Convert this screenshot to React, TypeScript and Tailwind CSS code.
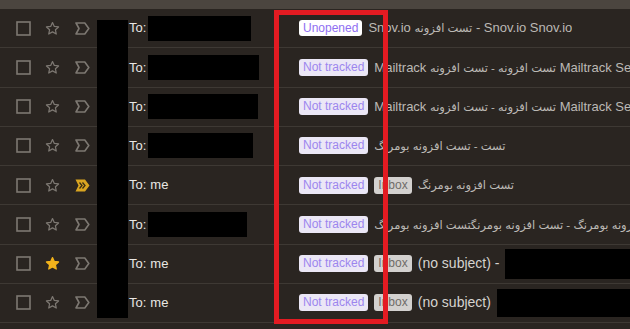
import * as React from "react"

type Row = {
  to: number | null
  badge: "Unopened" | "Not tracked"
  inbox: boolean
  subject: string
  starred?: boolean
  important?: boolean
  tail?: { w: number; h: number }
}

const rows: Row[] = [
  { to: 103, badge: "Unopened", inbox: false, subject: "Snov.io تست افزونه - Snov.io Snov.io" },
  { to: 111, badge: "Not tracked", inbox: false, subject: "Mailtrack تست افزونه - تست افزونه Mailtrack Sender" },
  { to: 110, badge: "Not tracked", inbox: false, subject: "Mailtrack تست افزونه - تست افزونه Mailtrack Sender" },
  { to: 105, badge: "Not tracked", inbox: false, subject: "تست - تست افزونه بومرنگ" },
  { to: null, badge: "Not tracked", inbox: true, subject: "تست افزونه بومرنگ", important: true },
  { to: 99, badge: "Not tracked", inbox: false, subject: "تست افزونه بومرنگ - تست افزونه بومرنگتست افزونه بومرنگ" },
  { to: null, badge: "Not tracked", inbox: true, subject: "(no subject) -", starred: true, tail: { w: 124, h: 30 } },
  { to: null, badge: "Not tracked", inbox: true, subject: "(no subject)", tail: { w: 131, h: 28 } },
]

// persian runs render a bit smaller than the latin text around them
function Subject({ text }: { text: string }) {
  const parts = text.split(/([\u0600-\u06FF][\u0600-\u06FF\s-]*[\u0600-\u06FF])/).filter(Boolean)
  return (
    <>
      {parts.map((p, i) =>
        /[\u0600-\u06FF]/.test(p) ? (
          <span key={i} className="text-[11.5px]">
            {p}
          </span>
        ) : (
          <span key={i}>{p}</span>
        )
      )}
    </>
  )
}

function Checkbox() {
  return (
    <svg width="15" height="15" viewBox="0 0 15 15" className="shrink-0">
      <rect x="1" y="1" width="13" height="13" fill="none" stroke="#7d7872" strokeWidth="1.6" />
    </svg>
  )
}

function Star({ filled }: { filled?: boolean }) {
  return (
    <svg width="15" height="15" viewBox="0 0 24 24" className="shrink-0">
      <path
        d="M12 2.5l2.9 6.2 6.8.8-5 4.6 1.3 6.7L12 17.4l-6 3.4 1.3-6.7-5-4.6 6.8-.8z"
        fill={filled ? "#f2b31b" : "none"}
        stroke={filled ? "#f2b31b" : "#7d7872"}
        strokeWidth="2"
        strokeLinejoin="round"
      />
    </svg>
  )
}

function Importance({ on }: { on?: boolean }) {
  if (on) {
    return (
      <svg width="15" height="13" viewBox="0 0 15 13" className="shrink-0">
        <path d="M0.5 0.5h9.5l4.5 6-4.5 6H0.5l3-6z" fill="#d9a521" />
        <path d="M4.5 3.5l2.5 3-2.5 3M7.5 3.5l2.5 3-2.5 3" fill="none" stroke="#3a2e14" strokeWidth="1.3" />
      </svg>
    )
  }
  return (
    <svg width="15" height="13" viewBox="0 0 15 13" className="shrink-0">
      <path
        d="M1 1h8.8l4 5.5-4 5.5H1l3-5.5z"
        fill="none"
        stroke="#7d7872"
        strokeWidth="1.6"
        strokeLinejoin="round"
      />
    </svg>
  )
}

function Badge({ label }: { label: Row["badge"] }) {
  const unopened = label === "Unopened"
  return (
    <span
      className={
        unopened
          ? "shrink-0 rounded-[3px] bg-white px-[4px] text-[12px] leading-[16px] text-[#8f6ff2]"
          : "shrink-0 rounded-[3px] bg-[#ebe7f6] px-[4px] text-[12px] leading-[17px] text-[#9c86ee]"
      }
    >
      {label}
    </span>
  )
}

export default function App() {
  return (
    <div
      className="relative h-[329px] w-[630px] overflow-hidden bg-[#2a2521]"
      style={{ fontFamily: '"Liberation Sans", "DejaVu Sans", sans-serif' }}
    >
      <div className="h-[9px] bg-[#4b453f]" />
      {rows.map((r, i) => (
        <div
          key={i}
          className="box-border flex h-[39.25px] items-center border-b border-[#3e3934] pl-[16px]"
        >
          <Checkbox />
          <div className="ml-[14px]">
            <Star filled={r.starred} />
          </div>
          <div className="ml-[15px]">
            <Importance on={r.important} />
          </div>
          <div className="ml-[39px] flex w-[170px] shrink-0 items-center text-[13px] text-[#e9e7e4]">
            <span>To:</span>
            {r.to ? (
              <span className="ml-[2px] h-[25px] bg-black" style={{ width: r.to }} />
            ) : (
              <span className="ml-[4px]">me</span>
            )}
          </div>
          <Badge label={r.badge} />
          {r.inbox && (
            <span className="ml-[6px] shrink-0 rounded-[3px] bg-[#d3d1cf] px-[4px] text-[12px] leading-[17px] text-[#6f6c69]">
              Inbox
            </span>
          )}
          <span
            className={
              r.subject.startsWith("(")
                ? "ml-[6px] shrink-0 whitespace-nowrap text-[14px] text-[#d6d3cf]"
                : "ml-[6px] min-w-0 overflow-hidden whitespace-nowrap text-[13px] text-[#bcb9b5]"
            }
          >
            <Subject text={r.subject} />
          </span>
          {r.tail && (
            <span className="ml-[6px] flex-1 bg-black" style={{ height: r.tail.h }} />
          )}
        </div>
      ))}
      <div className="absolute left-[97px] top-[20px] h-[298px] w-[31px] bg-black" />
      <div className="absolute left-[274px] top-[10px] h-[314px] w-[114px] border-[5px] border-[#e31b22]" />
    </div>
  )
}
